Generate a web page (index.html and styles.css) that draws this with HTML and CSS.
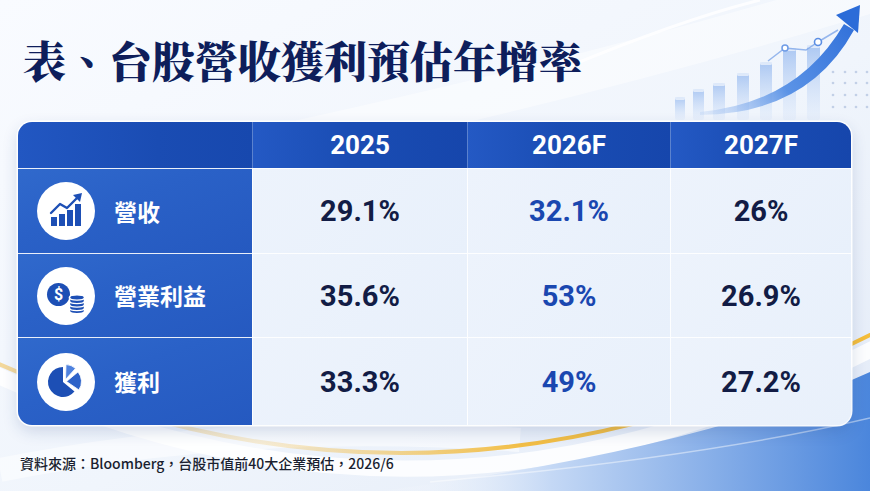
FILE: index.html
```html
<!DOCTYPE html>
<html lang="zh-Hant">
<head>
<meta charset="utf-8">
<title>台股營收獲利預估年增率</title>
<link rel="stylesheet" href="styles.css">
</head>
<body>
<div class="page">
  <svg class="bg" viewBox="0 0 870 491" preserveAspectRatio="none" aria-hidden="true">
    <defs>
      <linearGradient id="bgg" x1="0" y1="0" x2="1" y2="1">
        <stop offset="0" stop-color="#f9fbff"/>
        <stop offset="0.55" stop-color="#f0f5fc"/>
        <stop offset="1" stop-color="#e2eaf7"/>
      </linearGradient>
      <linearGradient id="barg" x1="0" y1="0" x2="0" y2="1">
        <stop offset="0" stop-color="#94b8ef" stop-opacity="0.75"/>
        <stop offset="1" stop-color="#dce8fa" stop-opacity="0.35"/>
      </linearGradient>
      <linearGradient id="arrg" x1="700" y1="113" x2="858" y2="8" gradientUnits="userSpaceOnUse">
        <stop offset="0" stop-color="#a9c6f2" stop-opacity="0.25"/>
        <stop offset="0.45" stop-color="#5b93e6"/>
        <stop offset="1" stop-color="#2c6cd8"/>
      </linearGradient>
      <linearGradient id="blueg" x1="380" y1="0" x2="870" y2="0" gradientUnits="userSpaceOnUse">
        <stop offset="0" stop-color="#ffffff" stop-opacity="0"/>
        <stop offset="0.35" stop-color="#c4d8f5"/>
        <stop offset="1" stop-color="#4b86dc"/>
      </linearGradient>
      <linearGradient id="yelg" x1="0" y1="0" x2="870" y2="0" gradientUnits="userSpaceOnUse">
        <stop offset="0" stop-color="#f3c35a" stop-opacity="0.6"/>
        <stop offset="0.3" stop-color="#f3c35a" stop-opacity="0.25"/>
        <stop offset="0.6" stop-color="#f2bb3d" stop-opacity="0.95"/>
        <stop offset="1" stop-color="#f4bd3b"/>
      </linearGradient>
    </defs>
    <rect width="870" height="491" fill="url(#bgg)"/>
    <path d="M 300 140 Q 620 70 880 -10" stroke="#ffffff" stroke-width="40" opacity="0.45" fill="none"/>
    <path d="M 560 70 Q 680 20 760 0" stroke="#ffffff" stroke-width="3" opacity="0.8" fill="none"/>
    <path d="M 0 470 Q 250 420 520 440" stroke="#ffffff" stroke-width="24" opacity="0.5" fill="none"/>
    <g fill="url(#barg)">
      <rect x="675" y="97" width="10" height="23" rx="2"/>
      <rect x="693" y="89" width="11" height="31" rx="2"/>
      <rect x="713" y="83" width="12" height="37" rx="2"/>
      <rect x="737" y="73" width="12" height="47" rx="2"/>
      <rect x="760" y="62" width="12" height="58" rx="2"/>
      <rect x="783" y="48" width="13" height="72" rx="2"/>
      <rect x="807" y="45" width="13" height="75" rx="2"/>
    </g>
    <g fill="#ffffff" opacity="0.6">
      <rect x="675" y="97" width="10" height="3" rx="1.5"/>
      <rect x="693" y="89" width="11" height="3" rx="1.5"/>
      <rect x="713" y="83" width="12" height="3" rx="1.5"/>
      <rect x="737" y="73" width="12" height="3" rx="1.5"/>
      <rect x="760" y="62" width="12" height="3" rx="1.5"/>
      <rect x="783" y="48" width="13" height="3" rx="1.5"/>
      <rect x="807" y="45" width="13" height="3" rx="1.5"/>
    </g>
    <polyline points="768,61 785,48 806,50 818,42 838,30" fill="none" stroke="#7ea6e8" stroke-width="1.5" opacity="0.8"/>
    <circle cx="785" cy="48" r="3" fill="#ffffff" stroke="#6f9ce6" stroke-width="1.5"/>
    <circle cx="818" cy="42" r="3.5" fill="#ffffff" stroke="#5b8ee3" stroke-width="1.6"/>
    <g fill="#9fb3d6" opacity="0.55">
      <circle cx="833" cy="72" r="1.3"/><circle cx="845" cy="72" r="1.3"/><circle cx="856" cy="72" r="1.3"/><circle cx="867" cy="72" r="1.3"/>
      <circle cx="833" cy="83" r="1.3"/><circle cx="845" cy="83" r="1.3"/><circle cx="856" cy="83" r="1.3"/><circle cx="867" cy="83" r="1.3"/>
      <circle cx="833" cy="95" r="1.3"/><circle cx="845" cy="95" r="1.3"/><circle cx="856" cy="95" r="1.3"/><circle cx="867" cy="95" r="1.3"/>
      <circle cx="833" cy="107" r="1.3"/><circle cx="845" cy="107" r="1.3"/><circle cx="856" cy="107" r="1.3"/><circle cx="867" cy="107" r="1.3"/>
    </g>
    <path d="M 700 112 Q 798 103 844 24 L 854 30 Q 808 114 700 115 Z" fill="url(#arrg)"/>
    <polygon points="860,5 836,15 858,33" fill="#2c6cd8"/>
    <path d="M -10 372 Q 430 578 880 345" stroke="#ffffff" stroke-width="16" opacity="0.85" fill="none"/>
    <path d="M 380 491 Q 700 450 870 372 L 870 491 Z" fill="url(#blueg)"/>
    <path d="M 430 482 Q 700 458 870 418" stroke="#ffffff" stroke-width="1.5" opacity="0.45" fill="none"/>
    <path d="M -10 360 Q 430 560 880 330" stroke="url(#yelg)" stroke-width="4" fill="none"/>
  </svg>

  <h1 class="title">表、台股營收獲利預估年增率</h1>

  <div class="card">
    <div class="hcell corner"></div>
    <div class="hcell">2025</div>
    <div class="hcell">2026F</div>
    <div class="hcell">2027F</div>

    <div class="label">
      <span class="ico">
        <svg viewBox="0 0 58 58" width="58" height="58">
          <circle cx="29" cy="29" r="29" fill="#ffffff"/>
          <g fill="#1d4fb5">
            <rect x="14" y="35" width="6" height="9"/>
            <rect x="22" y="32" width="6" height="12"/>
            <rect x="30" y="28" width="6" height="16"/>
            <rect x="38" y="22" width="6" height="22"/>
          </g>
          <polyline points="14,31 23,22 30,26 40,16" fill="none" stroke="#1d4fb5" stroke-width="2.4" stroke-linejoin="round" stroke-linecap="round"/>
          <polygon points="45,11 36,13 43,20" fill="#1d4fb5"/>
        </svg>
      </span>
      <span class="ltxt">營收</span>
    </div>
    <div class="val">29.1%</div>
    <div class="val hl">32.1%</div>
    <div class="val">26%</div>

    <div class="label">
      <span class="ico">
        <svg viewBox="0 0 58 58" width="58" height="58">
          <circle cx="29" cy="29" r="29" fill="#ffffff"/>
          <circle cx="21.5" cy="27.5" r="11.5" fill="#1d4fb5"/>
          <text x="21.5" y="33" text-anchor="middle" class="dollar">$</text>
          <g fill="#1d4fb5" stroke="#ffffff" stroke-width="1.4">
            <path d="M32.5,41 v3 a7.5,2.6 0 0,0 15,0 v-3 z"/>
            <path d="M32.5,37.5 v3.5 a7.5,2.6 0 0,0 15,0 v-3.5 z"/>
            <path d="M32.5,34 v3.5 a7.5,2.6 0 0,0 15,0 v-3.5 z"/>
            <path d="M32.5,30.5 v3.5 a7.5,2.6 0 0,0 15,0 v-3.5 z"/>
            <ellipse cx="40" cy="30.5" rx="7.5" ry="2.6"/>
          </g>
        </svg>
      </span>
      <span class="ltxt">營業利益</span>
    </div>
    <div class="val">35.6%</div>
    <div class="val hl">53%</div>
    <div class="val">26.9%</div>

    <div class="label">
      <span class="ico">
        <svg viewBox="0 0 58 58" width="58" height="58">
          <circle cx="29" cy="29" r="29" fill="#ffffff"/>
          <path d="M26,29 L26,14 A15,15 0 1,0 37.5,38.6 Z" fill="#1d4fb5"/>
          <path d="M28.5,26.5 L29,11.5 A15,15 0 0,1 38.5,15.4 Z" fill="#4f82de" stroke="#ffffff" stroke-width="0.8"/>
          <path d="M29.5,28.5 L41,18.9 A15,15 0 0,1 41.9,36.9 Z" fill="#2d62c8" stroke="#ffffff" stroke-width="0.8"/>
        </svg>
      </span>
      <span class="ltxt">獲利</span>
    </div>
    <div class="val">33.3%</div>
    <div class="val hl">49%</div>
    <div class="val">27.2%</div>
  </div>

  <p class="source">資料來源：Bloomberg，台股市值前40大企業預估，2026/6</p>
</div>
</body>
</html>
```

FILE: styles.css
```css
* { box-sizing: border-box; }

html, body {
  margin: 0;
  padding: 0;
}

body {
  width: 870px;
  height: 491px;
  overflow: hidden;
  font-family: "Noto Sans CJK TC", "Noto Sans", sans-serif;
}

.page {
  position: relative;
  width: 870px;
  height: 491px;
  overflow: hidden;
  padding: 30px 19px 0 18px;
  display: flex;
  flex-direction: column;
}

.bg {
  position: absolute;
  left: 0;
  top: 0;
  width: 870px;
  height: 491px;
  z-index: 0;
}

.title,
.card,
.source {
  position: relative;
  z-index: 1;
}

.title {
  margin: 0;
  padding-left: 5px;
  font-family: "Noto Serif CJK TC", "Noto Sans CJK TC", serif;
  font-size: 43px;
  line-height: 60px;
  font-weight: 900;
  color: #0e1e5b;
  letter-spacing: 0;
}

.card {
  margin-top: 32px;
  width: 833px;
  height: 303px;
  border-radius: 14px;
  overflow: hidden;
  display: grid;
  grid-template-columns: 234px 215px 203px 181px;
  grid-template-rows: 46px 85px 84px 88px;
  background: #eaf1fc;
  box-shadow: 0 0 0 1.5px rgba(255, 255, 255, 0.95), 0 6px 16px rgba(30, 60, 130, 0.18);
}

.hcell {
  display: flex;
  align-items: center;
  justify-content: center;
  background: linear-gradient(90deg, #2459c4 0%, #1a4db4 45%, #1646ac 100%);
  color: #ffffff;
  font-family: Roboto, "Liberation Sans", sans-serif;
  font-weight: 700;
  font-size: 26px;
  border-left: 1px solid rgba(160, 190, 240, 0.5);
}

.hcell.corner {
  border-left: none;
  background: linear-gradient(90deg, #2257c2 0%, #1a4cb3 60%, #1748ae 100%);
}

.label {
  display: flex;
  align-items: center;
  gap: 19px;
  padding-left: 19px;
  background: linear-gradient(160deg, #3069cc 0%, #2a61c7 40%, #2559c0 100%);
  border-top: 1.5px solid rgba(255, 255, 255, 0.9);
}

.ico {
  display: flex;
  width: 58px;
  height: 58px;
  flex: none;
}

.ico svg {
  display: block;
}

.dollar {
  font-family: Roboto, "Liberation Sans", sans-serif;
  font-weight: 700;
  font-size: 16px;
  fill: #ffffff;
}

.ltxt {
  color: #ffffff;
  font-family: "Noto Sans CJK TC", sans-serif;
  font-weight: 700;
  font-size: 23px;
  line-height: 1;
}

.val {
  display: flex;
  align-items: center;
  justify-content: center;
  background: linear-gradient(135deg, #edf3fc 0%, #e8f0fb 100%);
  border-top: 1px solid rgba(255, 255, 255, 0.9);
  border-left: 1px solid rgba(255, 255, 255, 0.9);
  font-family: Roboto, "Liberation Sans", sans-serif;
  font-weight: 700;
  font-size: 29px;
  color: #121c45;
}

.val.hl {
  color: #1a47b0;
}

.source {
  margin: 28px 0 0 2px;
  font-size: 14px;
  line-height: 20px;
  font-weight: 500;
  color: #1a1f30;
  font-family: "Noto Sans CJK TC", "Noto Sans", sans-serif;
}
```
